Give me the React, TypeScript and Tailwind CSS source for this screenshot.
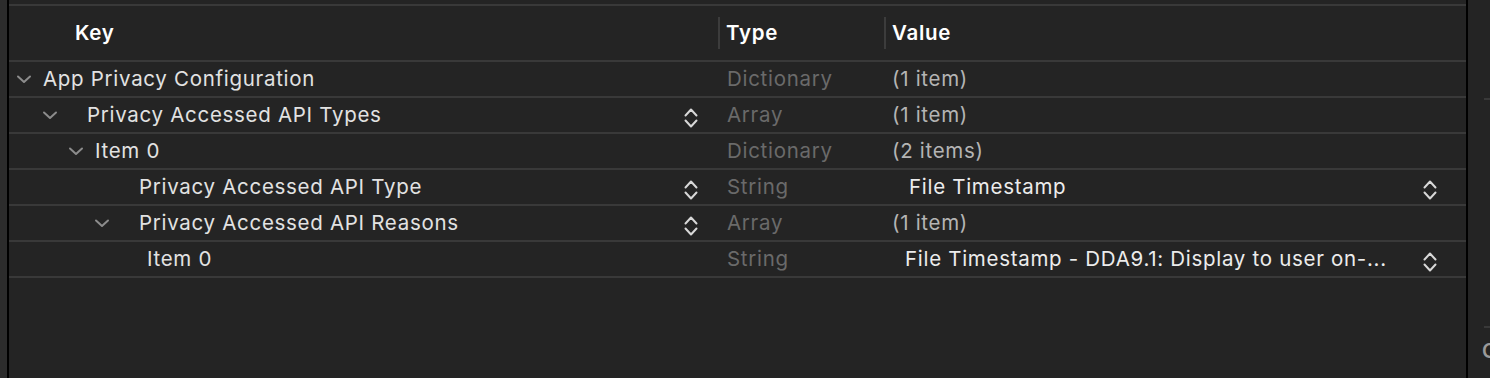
import React from 'react';

interface PlistRow {
  key: string;
  indent: string;
  chevron: boolean;
  keyPopup: boolean;
  type: string;
  value: string;
  valueTone: 'dim' | 'bright';
  valuePad: string;
  valuePopup: boolean;
}

const rows: PlistRow[] = [
  { key: 'App Privacy Configuration', indent: 'pl-[8px]', chevron: true, keyPopup: false, type: 'Dictionary', value: '(1 item)', valueTone: 'dim', valuePad: 'pl-[8px]', valuePopup: false },
  { key: 'Privacy Accessed API Types', indent: 'pl-[34px]', chevron: true, keyPopup: true, type: 'Array', value: '(1 item)', valueTone: 'dim', valuePad: 'pl-[8px]', valuePopup: false },
  { key: 'Item 0', indent: 'pl-[60px]', chevron: true, keyPopup: false, type: 'Dictionary', value: '(2 items)', valueTone: 'dim', valuePad: 'pl-[8px]', valuePopup: false },
  { key: 'Privacy Accessed API Type', indent: 'pl-[86px]', chevron: false, keyPopup: true, type: 'String', value: 'File Timestamp', valueTone: 'bright', valuePad: 'pl-[25px]', valuePopup: true },
  { key: 'Privacy Accessed API Reasons', indent: 'pl-[86px]', chevron: true, keyPopup: true, type: 'Array', value: '(1 item)', valueTone: 'dim', valuePad: 'pl-[8px]', valuePopup: false },
  { key: 'Item 0', indent: 'pl-[112px]', chevron: false, keyPopup: false, type: 'String', value: 'File Timestamp - DDA9.1: Display to user on-...', valueTone: 'bright', valuePad: 'pl-[21px]', valuePopup: true },
];

function Disclosure() {
  return (
    <svg width="16" height="10" viewBox="0 0 16 10" className="-ml-[1px] block">
      <path d="M2 2.5 L8 8 L14 2.5" fill="none" stroke="#8c8c8c" strokeWidth="2" strokeLinecap="round" strokeLinejoin="round" />
    </svg>
  );
}

function Stepper() {
  return (
    <svg width="16" height="24" viewBox="0 0 16 24" className="mt-[5px] block">
      <path d="M2.5 9.5 L8 3.5 L13.5 9.5" fill="none" stroke="#d8d8d8" strokeWidth="2" strokeLinecap="round" strokeLinejoin="round" />
      <path d="M2.5 14.5 L8 20.5 L13.5 14.5" fill="none" stroke="#d8d8d8" strokeWidth="2" strokeLinecap="round" strokeLinejoin="round" />
    </svg>
  );
}

export default function App() {
  return (
    <div className="flex h-[378px] w-[1490px] overflow-hidden bg-[#242424] text-[20.5px] tracking-[0.7px]" style={{ fontFamily: 'Inter, "Noto Sans", sans-serif' }}>
      <div className="w-[7px] bg-[#2c2c2c]" />
      <div className="w-[2px] bg-black" />

      <div className="flex w-[1457px] flex-col">
        <div className="h-[4px]" />
        <div className="h-[2px] bg-[#393939]" />

        {/* column header */}
        <div className="flex h-[54px] items-center font-semibold text-white">
          <div className="w-[709px] pl-[66px]">Key</div>
          <div className="flex w-[166px] items-center">
            <div className="h-[32px] w-[2px] bg-[#3c3c3c]" />
            <span className="pl-[6px]">Type</span>
          </div>
          <div className="flex flex-1 items-center">
            <div className="h-[32px] w-[2px] bg-[#3c3c3c]" />
            <span className="pl-[6px]">Value</span>
          </div>
        </div>
        <div className="h-[2px] bg-[#393939]" />

        {rows.map((row, index) => (
          <div key={index}>
            <div className="flex h-[34px] items-center">
              <div className={`flex w-[709px] items-center pr-[19px] ${row.indent}`}>
                <div className="flex w-[26px] items-center">{row.chevron && <Disclosure />}</div>
                <span className={`whitespace-nowrap text-[#e2e2e2] ${row.keyPopup ? 'pl-[18px]' : ''}`}>{row.key}</span>
                <div className="flex-1" />
                {row.keyPopup && <Stepper />}
              </div>
              <div className="w-[166px] pl-[9px] text-[#6a6a6a]">{row.type}</div>
              <div className={`flex flex-1 items-center pr-[28px] ${row.valuePad}`}>
                <span className={`whitespace-nowrap ${row.valueTone === 'bright' ? 'text-[#ececec]' : 'text-[#b4b4b4]'}`}>{row.value}</span>
                <div className="flex-1" />
                {row.valuePopup && <Stepper />}
              </div>
            </div>
            <div className="h-[2px] bg-[#393939]" />
          </div>
        ))}
      </div>

      <div className="w-[2px] bg-black" />
      <div className="flex flex-1 flex-col overflow-hidden">
        <div className="h-[98px]" />
        <div className="ml-[16px] h-[2px] bg-[#393939]" />
        <div className="h-[226px]" />
        <div className="ml-[16px] h-[2px] bg-[#393939]" />
        <div className="pl-[14px] pt-[8px] text-[20px] font-semibold text-[#9a9a9a]">C</div>
      </div>
    </div>
  );
}
